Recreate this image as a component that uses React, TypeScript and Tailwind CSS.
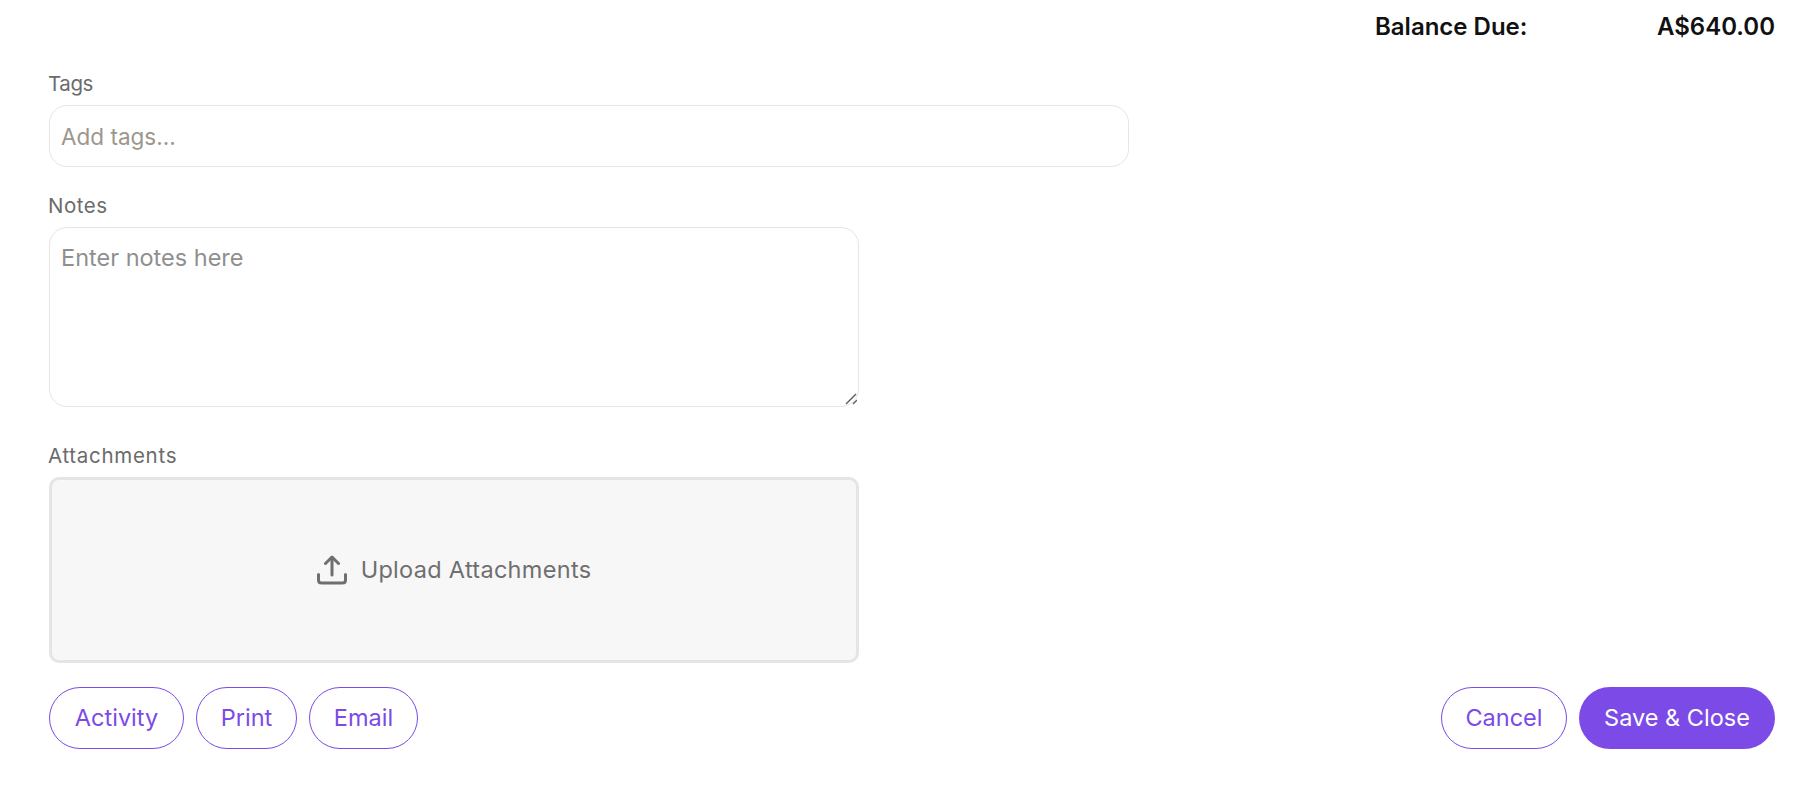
const fontStack = "font-['Inter','Liberation_Sans',sans-serif]";

const UploadIcon = () => (
  <svg width="30" height="30" viewBox="0 0 30 30" fill="none" stroke="#6f6f6f" strokeWidth="3" strokeLinecap="round" strokeLinejoin="round">
    <path d="M15 20V2.500" />
    <path d="M8.500 8.500L15 2L21.500 8.500" />
    <path d="M1.500 19.500V25C1.500 27 2.800 28 4.500 28H25.500C27.200 28 28.500 27 28.500 25V19.500" />
  </svg>
);

const ResizeGrip = () => (
  <svg width="14" height="14" viewBox="0 0 14 14" fill="none" stroke="#5f5f5f" strokeWidth="1.500" className="pointer-events-none absolute bottom-[2px] right-[2px]">
    <path d="M3 13L13 3" />
    <path d="M10 13L14 9" />
  </svg>
);

const FieldLabel = ({ label, className }: { label: string; className: string }) => (
  <label className={`${className} -ml-px block h-6 text-[20.500px] leading-6 text-[#6b6b6b]`}>{label}</label>
);

const OutlineButton = ({ label, width }: { label: string; width: string }) => (
  <button type="button" className={`${width} h-[62px] rounded-[31px] border border-[#7c4ae6] bg-white text-[23.500px] text-[#7c4ae6]`}>
    {label}
  </button>
);

const App = () => {
  return (
    <div className={`${fontStack} flex h-[793px] w-full flex-col bg-white pl-[49px] pr-[35px] pt-[12px]`}>
      <div className="flex h-[30px] items-center justify-end text-[24px] font-semibold leading-[30px] text-[#111111]">
        <span className="w-[282px]">Balance Due:</span>
        <span className="whitespace-nowrap">A$640.00</span>
      </div>

      <FieldLabel label="Tags" className="mt-[30px] mb-[9px] tracking-[-0.4px]" />
      <input
        placeholder="Add tags..."
        className="h-[62px] w-[1080px] rounded-[18px] border border-[#e5e5e5] bg-white pl-[11px] pr-3 text-[22.500px] text-[#333333] outline-none placeholder:text-[#9c968c]"
      />

      <FieldLabel label="Notes" className="mt-[27px] mb-[9px] tracking-[0.5px]" />
      <div className="relative h-[180px] w-[810px]">
        <textarea
          placeholder="Enter notes here"
          className="block h-full w-full resize-none rounded-[18px] border border-[#e5e5e5] bg-white pl-[11px] pr-3 py-4 text-[23.500px] leading-[28px] text-[#333333] outline-none placeholder:text-[#8f8f8f]"
        />
        <ResizeGrip />
      </div>

      <FieldLabel label="Attachments" className="mt-[37px] mb-[9px] tracking-[0.7px]" />
      <div className="flex h-[186px] w-[810px] items-center justify-center gap-[14px] rounded-[10px] border-[3px] border-[#e5e5e5] bg-[#f7f7f7]">
        <UploadIcon />
        <span className="text-[23.500px] tracking-[0.3px] text-[#6f6f6f]">Upload Attachments</span>
      </div>

      <div className="mt-[24px] flex items-center justify-between">
        <div className="flex gap-3">
          <OutlineButton label="Activity" width="w-[135px]" />
          <OutlineButton label="Print" width="w-[101px]" />
          <OutlineButton label="Email" width="w-[109px]" />
        </div>
        <div className="flex gap-3">
          <OutlineButton label="Cancel" width="w-[126px]" />
          <button type="button" className="h-[62px] w-[196px] rounded-[31px] bg-[#7c4ae6] text-[23.500px] text-white">
            Save &amp; Close
          </button>
        </div>
      </div>
    </div>
  );
};

export default App;
